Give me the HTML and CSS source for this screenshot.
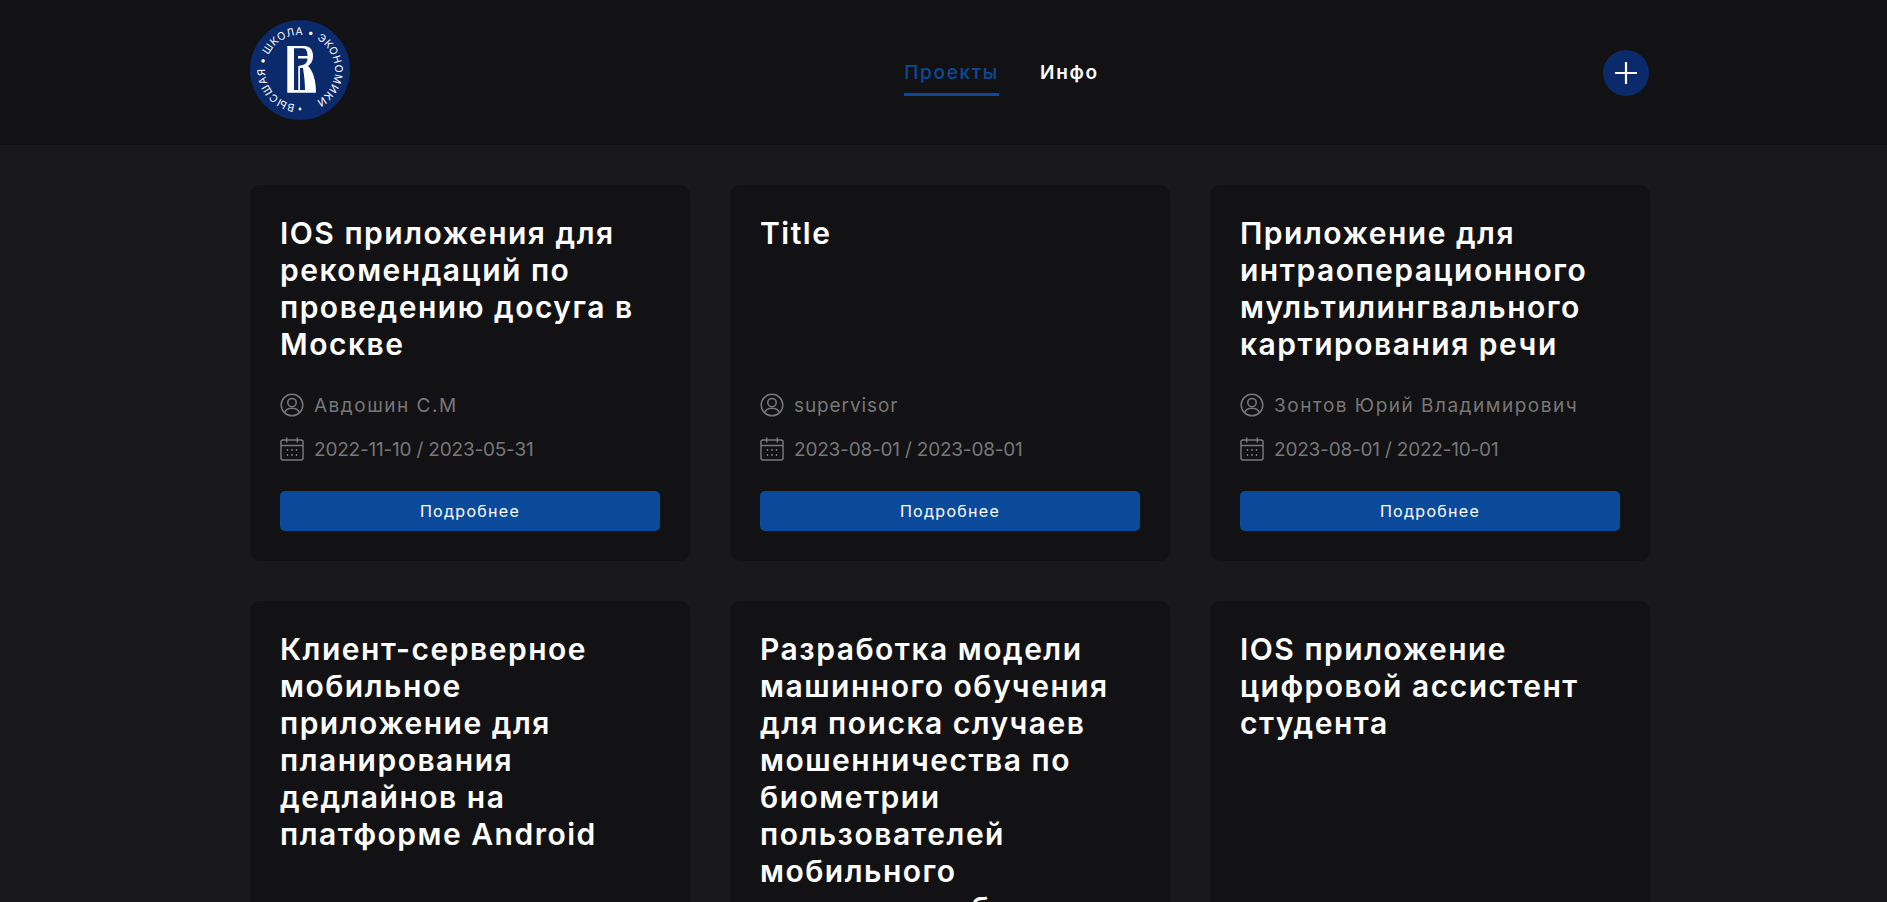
FILE: index.html
```html
<!DOCTYPE html>
<html lang="ru">
<head>
    <meta charset="UTF-8">
    <meta name="viewport" content="width=device-width, initial-scale=1.0">
    <title>Проекты</title>
    <link rel="stylesheet" href="styles.css">
</head>
<body>
    <!-- icons used by the cards -->
    <svg class="icon-defs" width="0" height="0">
        <symbol id="icon-user" viewBox="0 0 24 24">
            <circle cx="12" cy="12" r="10.8"/>
            <circle cx="12" cy="9.6" r="4.2"/>
            <path d="M4.6 19.6 C5.8 16.4 8.6 15.2 12 15.2 C15.4 15.2 18.2 16.4 19.4 19.6"/>
        </symbol>
        <symbol id="icon-calendar" viewBox="0 0 24 24">
            <rect x="1" y="3" width="22" height="20" rx="2"/>
            <path d="M1 8.4 H23 M6.7 0.4 V5.6 M17.3 0.4 V5.6"/>
            <path class="icon-dots" d="M6.8 13 H8.2 M11.3 13 H12.7 M15.8 13 H17.2 M6.8 18 H8.2 M11.3 18 H12.7 M15.8 18 H17.2"/>
        </symbol>
    </svg>
    <header class="header">
        <div class="header-inner">
            <a class="logo" href="#">
                <svg width="100" height="100" viewBox="0 0 100 100">
                    <circle cx="50" cy="50" r="50" fill="#0a2a6b"/>
                    <defs>
                        <path id="logo-ring" d="M 45 84.6 A 35 35 0 1 1 55 84.6"/>
                    </defs>
                    <text class="logo-text"><textPath href="#logo-ring">ВЫСШАЯ • ШКОЛА • ЭКОНОМИКИ</textPath></text>
                    <circle cx="50" cy="89" r="1.4" fill="#fff"/>
                    <path fill="#fff" fill-rule="evenodd" d="M37.3 26 H54 C60 26 63 30 63 36 C63 41 61 44 58 46 C63 51 66 60 66 72.7 H37.3 Z M44 28.3 H53 C56 28.3 57.5 31 57.5 36 H48 V38.4 H57.5 C57.5 41.5 56 44 53 45 L48.3 46 V70 H44 Z M50 48 H53 C54 55 55 62 55 70 H50 Z"/>
                </svg>
            </a>
            <nav class="nav">
                <a class="nav-link nav-link-active" href="#">Проекты</a>
                <a class="nav-link" href="#">Инфо</a>
            </nav>
            <button class="add-btn" type="button">
                <svg width="24" height="24" viewBox="0 0 24 24"><path d="M12 1 V23 M1 12 H23" stroke="#fff" stroke-width="2.2"/></svg>
            </button>
        </div>
    </header>
    <main class="projects">
        <article class="card">
            <h2 class="card-title">IOS приложения для рекомендаций по проведению досуга в Москве</h2>
            <div class="card-row card-person">
                <svg class="icon"><use href="#icon-user"/></svg>
                <span>Авдошин С.М</span>
            </div>
            <div class="card-row card-date">
                <svg class="icon"><use href="#icon-calendar"/></svg>
                <span>2022-11-10 / 2023-05-31</span>
            </div>
            <a class="card-btn" href="#">Подробнее</a>
        </article>
        <article class="card">
            <h2 class="card-title">Title</h2>
            <div class="card-row card-person card-person-latin">
                <svg class="icon"><use href="#icon-user"/></svg>
                <span>supervisor</span>
            </div>
            <div class="card-row card-date">
                <svg class="icon"><use href="#icon-calendar"/></svg>
                <span>2023-08-01 / 2023-08-01</span>
            </div>
            <a class="card-btn" href="#">Подробнее</a>
        </article>
        <article class="card">
            <h2 class="card-title">Приложение для интраоперационного мультилингвального картирования речи</h2>
            <div class="card-row card-person">
                <svg class="icon"><use href="#icon-user"/></svg>
                <span>Зонтов Юрий Владимирович</span>
            </div>
            <div class="card-row card-date">
                <svg class="icon"><use href="#icon-calendar"/></svg>
                <span>2023-08-01 / 2022-10-01</span>
            </div>
            <a class="card-btn" href="#">Подробнее</a>
        </article>
        <article class="card">
            <h2 class="card-title">Клиент-серверное мобильное приложение для планирования дедлайнов на платформе Android</h2>
        </article>
        <article class="card">
            <h2 class="card-title">Разработка модели машинного обучения для поиска случаев мошенничества по биометрии пользователей мобильного приложения банка</h2>
        </article>
        <article class="card">
            <h2 class="card-title">IOS приложение цифровой ассистент студента</h2>
        </article>
    </main>
</body>
</html>
```

FILE: styles.css
```css
html, body {
    height: 100%;
    overflow: hidden;
}

body {
    margin: 0;
    background-color: #19181d;
    color: #fff;
    font-family: Inter, "Noto Sans", sans-serif;
}

.icon-defs {
    display: block;
}

.header {
    background-color: #121214;
    height: 145px;
}

.header-inner {
    width: 1399px;
    height: 100%;
    margin-left: 250px;
    display: flex;
    align-items: center;
    justify-content: space-between;
}

.logo {
    display: block;
    width: 100px;
    height: 100px;
    margin-bottom: 5px;
}

.logo-text {
    font-size: 10.5px;
    letter-spacing: 0.6px;
    fill: #fff;
}

.nav {
    display: flex;
    gap: 41px;
    margin-left: 50px;
    margin-top: 12px;
}

.nav-link {
    color: #fff;
    font-size: 19px;
    font-weight: 600;
    letter-spacing: 1.7px;
    text-decoration: none;
    padding-bottom: 9px;
    border-bottom: 3px solid transparent;
}

.nav-link-active {
    color: #0b4a9a;
    font-weight: 500;
    border-bottom-color: #0b4a9a;
}

.add-btn {
    width: 46px;
    height: 46px;
    border: 0;
    padding: 0;
    border-radius: 50%;
    background-color: #0a2a6b;
    display: flex;
    align-items: center;
    justify-content: center;
}

.projects {
    width: 1400px;
    margin: 40px 0 0 250px;
    display: grid;
    grid-template-columns: repeat(3, 440px);
    column-gap: 40px;
    row-gap: 40px;
    align-items: start;
}

.card {
    background-color: #121214;
    border-radius: 10px;
    padding: 30px;
    min-height: 315px;
}

.card-title {
    margin: 0 0 30px;
    min-height: 148px;
    font-size: 30px;
    line-height: 37px;
    font-weight: 600;
    letter-spacing: 1.5px;
}

.card-row {
    display: flex;
    align-items: center;
    gap: 10px;
    height: 24px;
    margin-bottom: 20px;
    color: #777;
    font-size: 19px;
}

.card-person {
    letter-spacing: 1.5px;
}

.card-person-latin {
    letter-spacing: 0.9px;
}

.card-date {
    letter-spacing: -0.2px;
}

.icon {
    width: 24px;
    height: 24px;
    fill: none;
    stroke: #777;
    stroke-width: 1.5;
    flex-shrink: 0;
}

.icon-dots {
    stroke-width: 2;
}

.card-btn {
    display: block;
    height: 40px;
    margin-top: 30px;
    background-color: #0b4a9a;
    border-radius: 5px;
    color: #fff;
    font-size: 16px;
    letter-spacing: 1.3px;
    line-height: 40px;
    text-align: center;
    text-decoration: none;
}
```
